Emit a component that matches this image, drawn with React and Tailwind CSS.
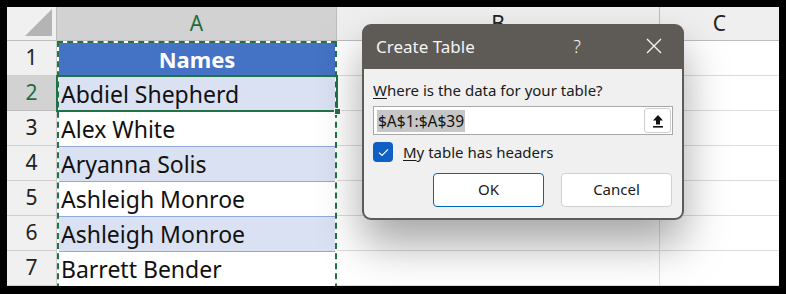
const rows = [
  { n: 2, name: 'Abdiel Shepherd', band: true },
  { n: 3, name: 'Alex White', band: false },
  { n: 4, name: 'Aryanna Solis', band: true },
  { n: 5, name: 'Ashleigh Monroe', band: false },
  { n: 6, name: 'Ashleigh Monroe', band: true },
  { n: 7, name: 'Barrett Bender', band: false },
];

const font = { fontFamily: '"Noto Sans", "Open Sans", sans-serif' };

function CreateTableDialog() {
  return (
    <div
      className="absolute left-[355px] top-[17px] w-[322px] rounded-[9px] bg-[#5e5a56] shadow-[0_24px_44px_rgba(0,0,0,0.35)] z-20"
      style={font}
    >
      <div className="flex h-[45px] items-center pl-[14px] pr-[22px] text-[#f4f4f4]">
        <span className="text-[17px]">Create Table</span>
        <span className="ml-auto mr-[65px] text-[18px] font-light">?</span>
        <svg width="16" height="16" viewBox="0 0 16 16" className="mb-[1px]">
          <path d="M1 1 L15 15 M15 1 L1 15" stroke="#f4f4f4" strokeWidth="1.4" />
        </svg>
      </div>
      <div className="mx-[2px] mb-[2px] rounded-b-[7px] bg-[#f0f0f0] px-[9px] pb-[11px] pt-[11px]">
        <div className="text-[15px] leading-[20px] text-[#1a1a1a]">
          <span className="underline underline-offset-2">W</span>here is the data for your table?
        </div>
        <div className="mt-[6px] flex h-[29px] items-center border border-[#a8a8a8] bg-white pl-[3px] pr-[1px]">
          <span className="bg-[#c6c6c6] px-[1px] text-[15.5px] leading-[22px] text-[#111]">$A$1:$A$39</span>
          <div className="ml-auto flex h-[25px] w-[27px] items-center justify-center rounded-[3px] border border-[#cfcfcf] bg-white">
            <svg width="12" height="14" viewBox="0 0 12 14">
              <path d="M6 1 L11 6.5 H8 V10.5 H4 V6.5 H1 Z" fill="#111" />
              <rect x="1" y="12" width="10" height="1.6" fill="#111" />
            </svg>
          </div>
        </div>
        <div className="mt-[6px] flex items-center gap-[10px]">
          <div className="flex h-[20px] w-[20px] items-center justify-center rounded-[4px] bg-[#0f5fc4]">
            <svg width="11" height="9" viewBox="0 0 11 9">
              <path d="M1 4.6 L4 7.5 L10 1.3" fill="none" stroke="#fff" strokeWidth="1.2" />
            </svg>
          </div>
          <span className="text-[15px] text-[#1a1a1a]">
            <span className="underline underline-offset-2">M</span>y table has headers
          </span>
        </div>
        <div className="mt-[9px] flex justify-end gap-[17px] pr-[1px]">
          <button className="h-[34px] w-[111px] rounded-[4px] border border-[#0067c0] bg-white text-[15px] text-[#1a1a1a]">
            OK
          </button>
          <button className="h-[34px] w-[111px] rounded-[4px] border border-[#d0d0d0] bg-white text-[15px] text-[#1a1a1a]">
            Cancel
          </button>
        </div>
      </div>
    </div>
  );
}

export default function App() {
  return (
    <div className="h-[294px] w-[786px] bg-black pb-[8px] pl-[7px] pr-[7px] pt-[7px]" style={font}>
      <div className="relative h-[279px] w-[772px] overflow-hidden bg-white">
        <div className="grid grid-cols-[50px_280px_323px_119px] grid-rows-[34px_repeat(7,35px)]">
          {/* header row */}
          <div className="relative border-b border-r border-[#bdbdbd] bg-[#f0f0f0]">
            <svg className="absolute bottom-[4px] right-[4px]" width="27" height="27" viewBox="0 0 27 27">
              <path d="M27 0 V27 H0 Z" fill="#b4b4b4" />
            </svg>
          </div>
          <div className="flex items-center justify-center border-b border-r border-[#bdbdbd] bg-[#d2d2d2] text-[21px] text-[#1e6b40]">
            A
          </div>
          <div className="flex items-center justify-center border-b border-r border-[#bdbdbd] bg-[#efefef] text-[21px] text-[#222]">
            B
          </div>
          <div className="flex items-center justify-center border-b border-[#bdbdbd] bg-[#efefef] text-[21px] text-[#222]">
            C
          </div>

          {/* row 1 */}
          <div className="flex items-center justify-center border-b border-r border-[#cfcfcf] bg-[#f0f0f0] text-[21px] text-[#222]">
            1
          </div>
          <div className="flex items-center justify-center bg-[#4472c4] pt-[1px] text-[22px] font-bold text-white">
            Names
          </div>
          <div className="border-b border-r border-[#dcdcdc]" />
          <div className="border-b border-[#dcdcdc]" />

          {rows.map((r) => (
            <div key={r.n} className="contents">
              <div
                className={
                  r.n === 2
                    ? 'flex items-center justify-center border-b border-r border-[#bdbdbd] bg-[#d2d2d2] text-[21px] text-[#1e6b40]'
                    : 'flex items-center justify-center border-b border-r border-[#cfcfcf] bg-[#f0f0f0] text-[21px] text-[#222]'
                }
              >
                {r.n}
              </div>
              <div
                className={
                  r.band
                    ? 'flex items-center border-t border-[#8ea9db] bg-[#d9e1f2] pl-[4px] pt-[1px] text-[23px] text-[#111]'
                    : 'flex items-center border-t border-[#8ea9db] bg-white pl-[4px] pt-[1px] text-[23px] text-[#111]'
                }
              >
                {r.name}
              </div>
              <div className="border-b border-r border-[#dcdcdc]" />
              <div className="border-b border-[#dcdcdc]" />
            </div>
          ))}
        </div>

        {/* copy marquee around A1:A39 */}
        <div className="pointer-events-none absolute left-[50px] top-[34px] h-[400px] w-[280px] border-2 border-white z-10" />
        <div className="pointer-events-none absolute left-[50px] top-[34px] h-[400px] w-[280px] border-2 border-dashed border-[#217346] z-10" />

        {/* active cell A2 */}
        <div className="pointer-events-none absolute left-[49px] top-[68px] h-[37px] w-[282px] border-2 border-[#217346] z-10" />
        <div className="pointer-events-none absolute left-[327px] top-[101px] h-[7px] w-[7px] border border-white bg-[#217346] z-10" />

        <CreateTableDialog />
      </div>
    </div>
  );
}
